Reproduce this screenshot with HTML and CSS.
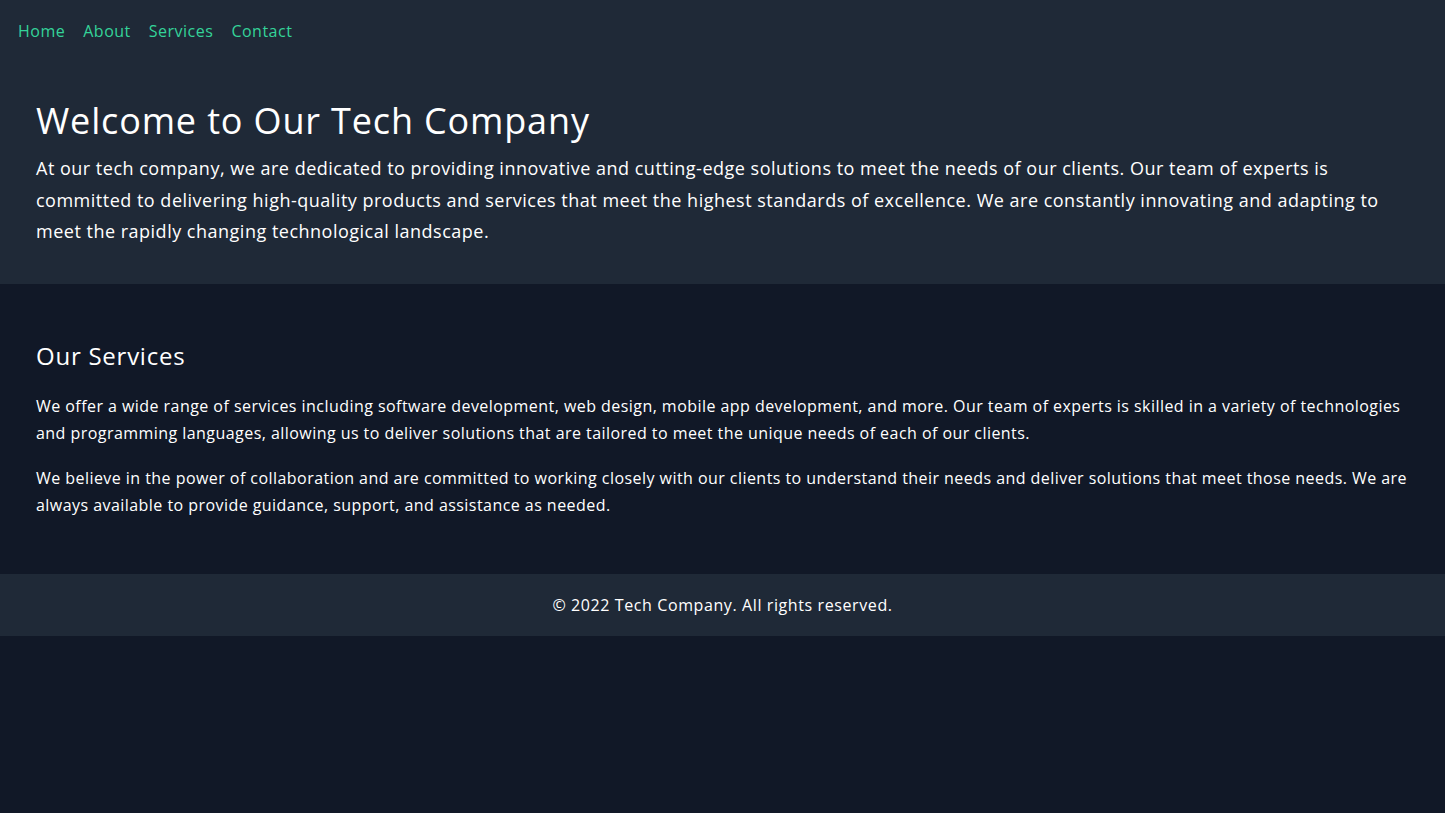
FILE: index.html
```html
<!DOCTYPE html>
<html lang="en">
<head>
<meta charset="utf-8">
<title>Tech Company</title>
<link rel="stylesheet" href="styles.css">
</head>
<body>
<header class="top">
  <nav class="nav">
    <a href="#">Home</a>
    <a href="#">About</a>
    <a href="#">Services</a>
    <a href="#">Contact</a>
  </nav>
  <section class="hero">
    <h1>Welcome to Our Tech Company</h1>
    <p>At our tech company, we are dedicated to providing innovative and cutting-edge solutions to meet the needs of our clients. Our team of experts is committed to delivering high-quality products and services that meet the highest standards of excellence. We are constantly innovating and adapting to meet the rapidly changing technological landscape.</p>
  </section>
</header>
<main class="services">
  <h2>Our Services</h2>
  <p>We offer a wide range of services including software development, web design, mobile app development, and more. Our team of experts is skilled in a variety of technologies and programming languages, allowing us to deliver solutions that are tailored to meet the unique needs of each of our clients.</p>
  <p>We believe in the power of collaboration and are committed to working closely with our clients to understand their needs and deliver solutions that meet those needs. We are always available to provide guidance, support, and assistance as needed.</p>
</main>
<footer class="footer">© 2022 Tech Company. All rights reserved.</footer>
</body>
</html>
```
FILE: styles.css
```css
* { box-sizing: border-box; }
html, body { margin: 0; padding: 0; }
body {
  background: #111827;
  color: #ffffff;
  font-family: "Open Sans", "Liberation Sans", Arial, sans-serif;
  font-size: 16px;
  line-height: 1.75;
}
.top { background: #1f2937; }
.nav {
  display: flex;
  gap: 18px;
  padding: 17px 18px 15px;
}
.nav a {
  color: #34d399;
  text-decoration: none;
  font-size: 16px;
  line-height: 28px;
  letter-spacing: 0.5px;
}
.hero {
  padding: 41px 36px 36px;
}
.hero h1 {
  margin: 0 0 12px;
  font-size: 36px;
  font-weight: 400;
  line-height: 40px;
  letter-spacing: 0.85px;
}
.hero p {
  margin: 0;
  font-size: 18px;
  line-height: 31.5px;
  letter-spacing: 0.5px;
}
.services {
  padding: 56px 36px 54px;
}
.services h2 {
  margin: 0 0 21px;
  font-size: 24px;
  font-weight: 400;
  line-height: 32px;
  letter-spacing: 0.75px;
}
.services p {
  margin: 0 0 17px;
  font-size: 16px;
  line-height: 27.5px;
  letter-spacing: 0.45px;
}
.services p:last-child { margin-bottom: 0; }
.footer {
  background: #1f2937;
  text-align: center;
  padding: 17px 0;
  font-size: 16px;
  line-height: 28px;
  letter-spacing: 0.6px;
}
```
